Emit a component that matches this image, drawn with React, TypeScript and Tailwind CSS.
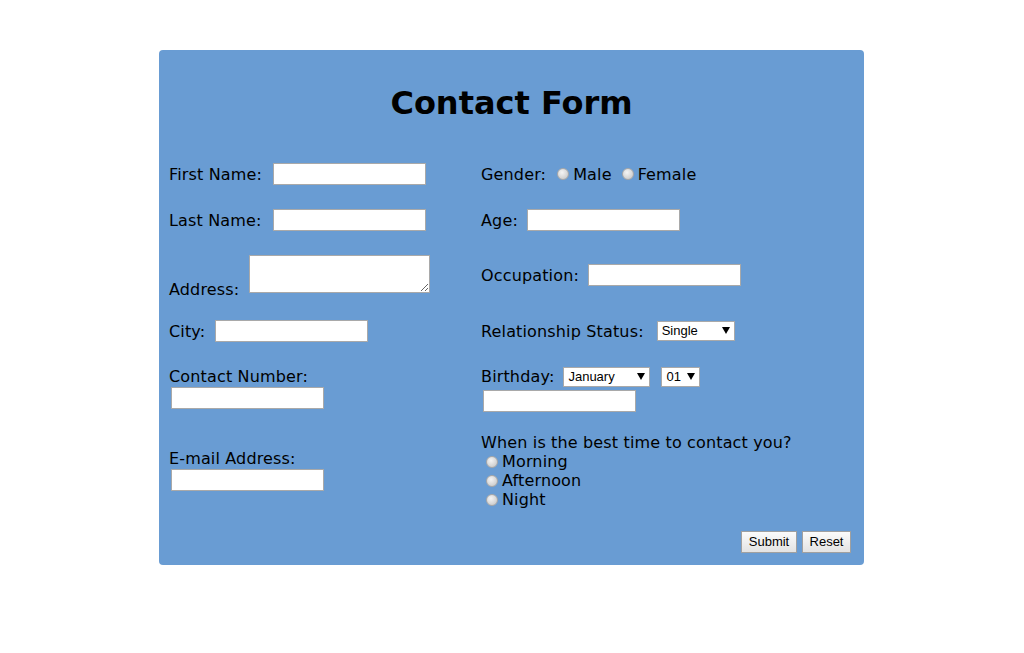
import React from 'react';

const label = 'text-[16px] leading-[19px] tracking-[0.15px] text-black whitespace-nowrap';
const textInput = 'h-[22px] w-[153px] border border-[#a9a9a9] bg-white px-1 text-[13px] outline-none';
const radio =
  'h-[12px] w-[12px] shrink-0 appearance-none rounded-full border border-[#a8a8a8] bg-[radial-gradient(circle_at_40%_35%,#f4f4f4,#d6d6d6_60%,#c2c2c2)]';

function Select({ value, options, width }: { value: string; options: string[]; width: string }) {
  return (
    <span className={`relative inline-flex h-[20px] ${width}`}>
      <select
        defaultValue={value}
        className="h-full w-full appearance-none border border-[#a9a9a9] bg-white pl-[4px] text-[13px] leading-[18px] text-black outline-none"
        style={{ fontFamily: '"Liberation Sans", Arial, sans-serif' }}
      >
        {options.map((o) => (
          <option key={o}>{o}</option>
        ))}
      </select>
      <span className="pointer-events-none absolute right-[5px] top-[6px] h-0 w-0 border-x-[4px] border-t-[7px] border-x-transparent border-t-black" />
    </span>
  );
}

function Radio({ name, text, className = '' }: { name: string; text: string; className?: string }) {
  return (
    <label className={`flex items-center ${className}`}>
      <input type="radio" name={name} className={radio} />
      <span className={`${label} ml-[4px]`}>{text}</span>
    </label>
  );
}

export default function App() {
  const months = ['January', 'February', 'March', 'April', 'May', 'June', 'July', 'August', 'September', 'October', 'November', 'December'];
  const days = Array.from({ length: 31 }, (_, i) => String(i + 1).padStart(2, '0'));

  return (
    <div className="min-h-screen bg-white pt-[50px]" style={{ fontFamily: '"DejaVu Sans", Verdana, sans-serif' }}>
      <form className="ml-[159px] w-[705px] rounded-[4px] bg-[#699cd3] pb-[12px] pt-[35px]">
        <h1 className="text-center text-[32px] font-bold leading-[37px] text-black">Contact Form</h1>

        <div className="mt-[41px] flex pl-[10px]">
          {/* left column */}
          <div className="flex w-[312px] flex-col">
            <div className="flex h-[22px] items-center gap-[11px]">
              <span className={label}>First Name:</span>
              <input className={textInput} />
            </div>
            <div className="mt-[24px] flex h-[22px] items-center gap-[11px]">
              <span className={label}>Last Name:</span>
              <input className={textInput} />
            </div>
            <div className="mt-[24px] flex items-end gap-[10px]">
              <span className={label}>Address:</span>
              <textarea className="mb-[6px] h-[38px] w-[181px] resize border border-[#a9a9a9] bg-white text-[13px] outline-none" />
            </div>
            <div className="mt-[21px] flex h-[22px] items-center gap-[10px]">
              <span className={label}>City:</span>
              <input className={textInput} />
            </div>
            <span className={`${label} mt-[25px]`}>Contact Number:</span>
            <input className={`${textInput} ml-[2px] mt-[1px]`} />
            <span className={`${label} mt-[40px]`}>E-mail Address:</span>
            <input className={`${textInput} ml-[2px] mt-[1px]`} />
          </div>

          {/* right column */}
          <div className="flex flex-1 flex-col">
            <div className="flex h-[22px] items-center">
              <span className={label}>Gender:</span>
              <Radio name="gender" text="Male" className="ml-[11px]" />
              <Radio name="gender" text="Female" className="ml-[10px]" />
            </div>
            <div className="mt-[24px] flex h-[22px] items-center gap-[9px]">
              <span className={label}>Age:</span>
              <input className={textInput} />
            </div>
            <div className="mt-[33px] flex h-[22px] items-center gap-[9px]">
              <span className={label}>Occupation:</span>
              <input className={textInput} />
            </div>
            <div className="mt-[34px] flex h-[22px] items-center gap-[13px]">
              <span className={label}>Relationship Status:</span>
              <Select value="Single" options={['Single', 'Married', 'Divorced', 'Widowed']} width="w-[78px]" />
            </div>
            <div className="mt-[23px] flex h-[22px] items-center">
              <span className={label}>Birthday:</span>
              <span className="ml-[9px]">
                <Select value="January" options={months} width="w-[87px]" />
              </span>
              <span className="ml-[11px]">
                <Select value="01" options={days} width="w-[39px]" />
              </span>
            </div>
            <input className={`${textInput} ml-[2px] mt-[3px]`} />
            <span className={`${label} mt-[21px]`}>When is the best time to contact you?</span>
            <Radio name="time" text="Morning" className="ml-[5px]" />
            <Radio name="time" text="Afternoon" className="ml-[5px]" />
            <Radio name="time" text="Night" className="ml-[5px]" />
          </div>
        </div>

        <div
          className="mt-[22px] flex justify-end gap-[5px] pr-[13px]"
          style={{ fontFamily: '"Liberation Sans", Arial, sans-serif' }}
        >
          <button type="submit" className="h-[22px] w-[56px] border border-[#a0a0a0] bg-[linear-gradient(#fbfbfb,#e3e3e3)] text-[13px] text-black">
            Submit
          </button>
          <button type="reset" className="h-[22px] w-[49px] border border-[#a0a0a0] bg-[linear-gradient(#fbfbfb,#e3e3e3)] text-[13px] text-black">
            Reset
          </button>
        </div>
      </form>
    </div>
  );
}
